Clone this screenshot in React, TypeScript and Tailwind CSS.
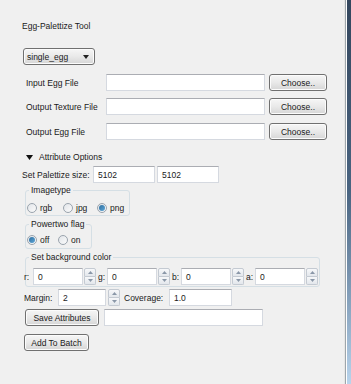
import React from "react";

const field = "bg-white border border-[#d5d9e0] border-t-[#abadb3] h-[17px] flex items-center px-[4px]";
const face =
  "h-[17px] flex items-center rounded-[3px] border border-[#707070] bg-gradient-to-b from-[#f6f6f6] via-[#e9e9e9] to-[#d6d6d6] shadow-[inset_0_0_0_1px_#fcfcfc]";
const btn = `${face} justify-center`;

function Spin() {
  return (
    <div className="ml-[1px] flex h-[17px] w-[12px] flex-col">
      <div className="flex flex-1 items-center justify-center rounded-t-[2px] border border-[#c4cad2] bg-gradient-to-b from-[#f7f8fa] to-[#e3e7ec]">
        <svg width="5" height="3" viewBox="0 0 5 3"><path d="M0 3 L2.5 0 L5 3 Z" fill="#8a97a8" /></svg>
      </div>
      <div className="flex flex-1 items-center justify-center rounded-b-[2px] border border-t-0 border-[#c4cad2] bg-gradient-to-b from-[#f7f8fa] to-[#e3e7ec]">
        <svg width="5" height="3" viewBox="0 0 5 3"><path d="M0 0 L2.5 3 L5 0 Z" fill="#8a97a8" /></svg>
      </div>
    </div>
  );
}

function Radio({ on, label, w }: { on?: boolean; label: string; w: string }) {
  return (
    <div className={`flex items-center ${w}`}>
      <span className="flex h-[10px] w-[10px] items-center justify-center rounded-full border border-[#9aa3ad] bg-gradient-to-br from-[#e2e5e9] to-[#fbfbfb]">
        {on && <span className="h-[6px] w-[6px] rounded-full bg-gradient-to-br from-[#2f6f9f] to-[#5fa7d8]" />}
      </span>
      <span className="ml-[3px]">{label}</span>
    </div>
  );
}

function Group({ title, className, children }: { title: string; className: string; children: React.ReactNode }) {
  return (
    <fieldset className={`rounded-[3px] border border-[#d5dfe5] ${className}`}>
      <legend className="ml-[3px] px-[2px] leading-[12px]">{title}</legend>
      {children}
    </fieldset>
  );
}

function FileRow({ label, mt }: { label: string; mt: string }) {
  return (
    <div className={`flex items-center ${mt}`}>
      <div className="ml-[26px] w-[80px]">{label}</div>
      <div className={`${field} w-[159px]`} />
      <div className={`${btn} ml-[4px] w-[58px]`}>Choose..</div>
    </div>
  );
}

export default function App() {
  const colors = ["r", "g", "b", "a"];
  return (
    <div className="flex h-[384px] w-[351px] bg-[#f0f0f0] font-['Liberation_Sans',Arial,sans-serif] text-[8.5px] leading-[12px] text-[#1a1a1a]">
      <div className="flex flex-1 flex-col">
        <div className="ml-[22px] mt-[20px]">Egg-Palettize Tool</div>

        <div className={`${face} ml-[23px] mt-[16px] w-[72px] justify-between pl-[3px] pr-[5px]`}>
          <span>single_egg</span>
          <svg width="6" height="4" viewBox="0 0 6 4"><path d="M0 0 L6 0 L3 4 Z" fill="#222" /></svg>
        </div>

        <FileRow label="Input Egg File" mt="mt-[9px]" />
        <FileRow label="Output Texture File" mt="mt-[7px]" />
        <FileRow label="Output Egg File" mt="mt-[8px]" />

        <div className="ml-[26px] mt-[11px] flex items-center">
          <svg width="7" height="5" viewBox="0 0 7 5"><path d="M0 0 L7 0 L3.5 5 Z" fill="#111" /></svg>
          <span className="ml-[6px]">Attribute Options</span>
        </div>

        <div className="mt-[3px] flex items-center">
          <div className="ml-[22px] w-[71px]">Set Palettize size:</div>
          <div className={`${field} w-[62px]`}>5102</div>
          <div className={`${field} ml-[2px] w-[62px]`}>5102</div>
        </div>

        <Group title="Imagetype" className="ml-[25px] mt-[1px] w-[105px] pb-[1px]">
          <div className="mt-[6px] flex items-center pl-[1px]">
            <Radio label="rgb" w="w-[36px]" />
            <Radio label="jpg" w="w-[34px]" />
            <Radio on label="png" w="w-[30px]" />
          </div>
        </Group>

        <Group title="Powertwo flag" className="ml-[25px] mt-[2px] w-[67px] pb-[2px]">
          <div className="mt-[4px] flex items-center pl-[1px]">
            <Radio on label="off" w="w-[31px]" />
            <Radio label="on" w="w-[26px]" />
          </div>
        </Group>

        <Group title="Set background color" className="ml-[25px] mt-[2px] w-[295px] pb-[1px]">
          <div className="-ml-[2px] mt-[5px] flex items-center gap-[2px]">
            {colors.map((c) => (
              <div key={c} className="flex items-center">
                <span className="w-[9px]">{c}:</span>
                <div className={`${field} w-[50px]`}>0</div>
                <Spin />
              </div>
            ))}
          </div>
        </Group>

        <div className="mt-[2px] flex items-center">
          <span className="ml-[24px] w-[34px]">Margin:</span>
          <div className={`${field} w-[48px]`}>2</div>
          <div className="ml-[1px]">
            <Spin />
          </div>
          <span className="ml-[4px] w-[45px]">Coverage:</span>
          <div className={`${field} w-[63px]`}>1.0</div>
        </div>

        <div className="mt-[3px] flex items-center">
          <div className={`${btn} ml-[25px] w-[74px]`}>Save Attributes</div>
          <div className={`${field} ml-[5px] w-[159px]`} />
        </div>

        <div className={`${btn} ml-[24px] mt-[8px] w-[65px]`}>Add To Batch</div>
      </div>

      <div className="flex h-full">
        <div className="w-[1px] bg-[#e6e6e6]" />
        <div className="w-[1px] bg-[#9ea6ab]" />
        <div className="w-[1px] bg-white" />
        <div className="w-[4px] bg-gradient-to-b from-[#34475e] via-[#4a6582] to-[#b9d4ec]" />
      </div>
    </div>
  );
}
